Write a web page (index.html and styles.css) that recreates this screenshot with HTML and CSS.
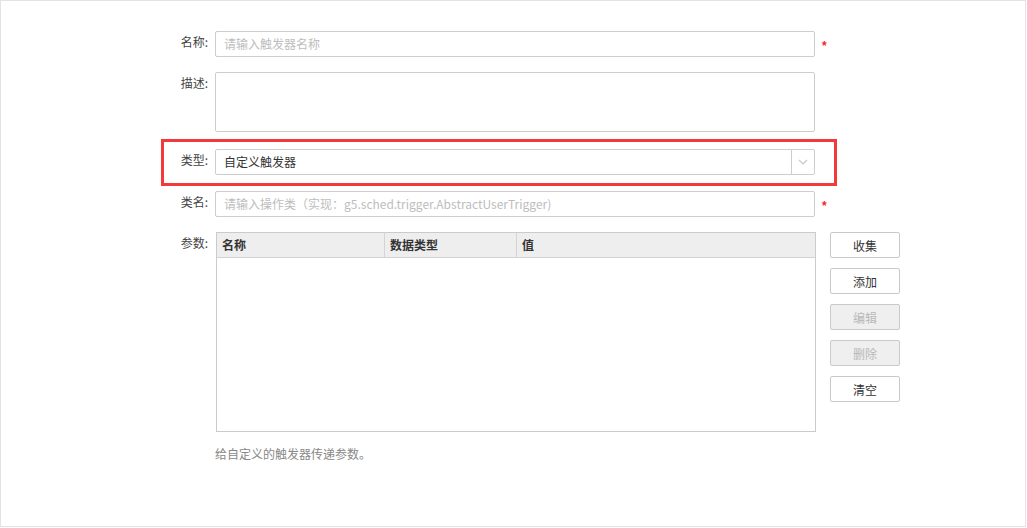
FILE: index.html
```html
<!DOCTYPE html>
<html lang="zh">
<head>
<meta charset="utf-8">
<title>触发器</title>
<link rel="stylesheet" href="styles.css">
</head>
<body>
<div class="frame">
  <div class="form">
    <div class="row">
      <label class="lbl">名称:</label>
      <div class="field input placeholder">请输入触发器名称</div>
      <span class="req">*</span>
    </div>
    <div class="row row-desc">
      <label class="lbl">描述:</label>
      <div class="field textarea"></div>
    </div>
    <div class="row row-type">
      <label class="lbl">类型:</label>
      <div class="field select">
        <span class="select-text">自定义触发器</span>
        <span class="select-btn">
          <svg width="10" height="6" viewBox="0 0 10 6"><path d="M1 1 L5 5 L9 1" fill="none" stroke="#c8c8c8" stroke-width="1.2"/></svg>
        </span>
      </div>
      <div class="highlight"></div>
    </div>
    <div class="row row-class">
      <label class="lbl">类名:</label>
      <div class="field input placeholder">请输入操作类（实现：g5.sched.trigger.AbstractUserTrigger)</div>
      <span class="req">*</span>
    </div>
    <div class="row row-params">
      <label class="lbl">参数:</label>
      <div class="table">
        <div class="thead">
          <div class="th c1">名称</div>
          <div class="th c2">数据类型</div>
          <div class="th c3">值</div>
        </div>
        <div class="tbody"></div>
      </div>
      <div class="buttons">
        <button class="btn">收集</button>
        <button class="btn">添加</button>
        <button class="btn disabled">编辑</button>
        <button class="btn disabled">删除</button>
        <button class="btn">清空</button>
      </div>
    </div>
    <div class="hint">给自定义的触发器传递参数。</div>
  </div>
</div>
</body>
</html>
```
FILE: styles.css
```css
* { box-sizing: border-box; }
html, body { margin: 0; padding: 0; background: #fff; }
body {
  font-family: "Microsoft YaHei", "Noto Sans CJK SC", "Noto Sans", sans-serif;
  font-size: 12px;
  color: #333;
}
.frame {
  width: 1026px;
  height: 527px;
  border: 1px solid #e3e3e3;
}
.form {
  padding: 30px 0 0 149px;
}
.row {
  display: flex;
  align-items: flex-start;
  margin-bottom: 15px;
  position: relative;
}
.row-desc { margin-bottom: 17px; }
.row-type { margin-bottom: 16px; }
.row-class { margin-bottom: 15px; }
.lbl {
  width: 58px;
  text-align: right;
  color: #444;
  line-height: 20px;
  padding-top: 1px;
  margin-right: 7px;
  flex: none;
}
.field {
  width: 600px;
  height: 26px;
  border: 1px solid #cdcdcd;
  border-radius: 2px;
  background: #fff;
  flex: none;
}
.input {
  line-height: 24px;
  padding: 0 8px;
  white-space: nowrap;
  overflow: hidden;
}
.placeholder { color: #bdbdbd; }
.textarea { height: 60px; }
.req {
  color: #f22;
  margin-left: 7px;
  line-height: 20px;
  height: 26px;
  padding-top: 5px;
  font-size: 12px;
  font-family: "Liberation Sans", sans-serif;
  font-weight: bold;
}
.select {
  display: flex;
  align-items: stretch;
}
.select-text {
  flex: 1;
  line-height: 24px;
  padding: 0 8px;
  color: #333;
}
.select-btn {
  width: 23px;
  border-left: 1px solid #cdcdcd;
  display: flex;
  align-items: center;
  justify-content: center;
}
.highlight {
  position: absolute;
  left: 11px;
  top: -10px;
  width: 676px;
  height: 47px;
  border: 3px solid #f23a3a;
  pointer-events: none;
}
.table {
  width: 600px;
  height: 200px;
  margin-left: 1px;
  border: 1px solid #cbcbcb;
  flex: none;
  display: flex;
  flex-direction: column;
}
.thead {
  display: flex;
  height: 25px;
  background: #eeeeee;
  border-bottom: 1px solid #d2d2d2;
}
.th {
  font-weight: bold;
  color: #333;
  line-height: 24px;
  padding-left: 5px;
}
.c1 { width: 168px; border-right: 1px solid #d4d4d4; }
.c2 { width: 132px; border-right: 1px solid #d4d4d4; }
.c3 { flex: 1; }
.tbody { flex: 1; }
.buttons {
  display: flex;
  flex-direction: column;
  gap: 10px;
  margin-left: 14px;
}
.btn {
  width: 70px;
  height: 26px;
  border: 1px solid #c9c9c9;
  border-radius: 2px;
  background: #fff;
  font-family: inherit;
  font-size: 12px;
  color: #333;
  padding: 0;
}
.btn.disabled {
  background: #efefef;
  color: #b8b8b8;
}
.hint {
  margin-left: 65px;
  color: #888;
  line-height: 16px;
  margin-top: -1px;
}
```
